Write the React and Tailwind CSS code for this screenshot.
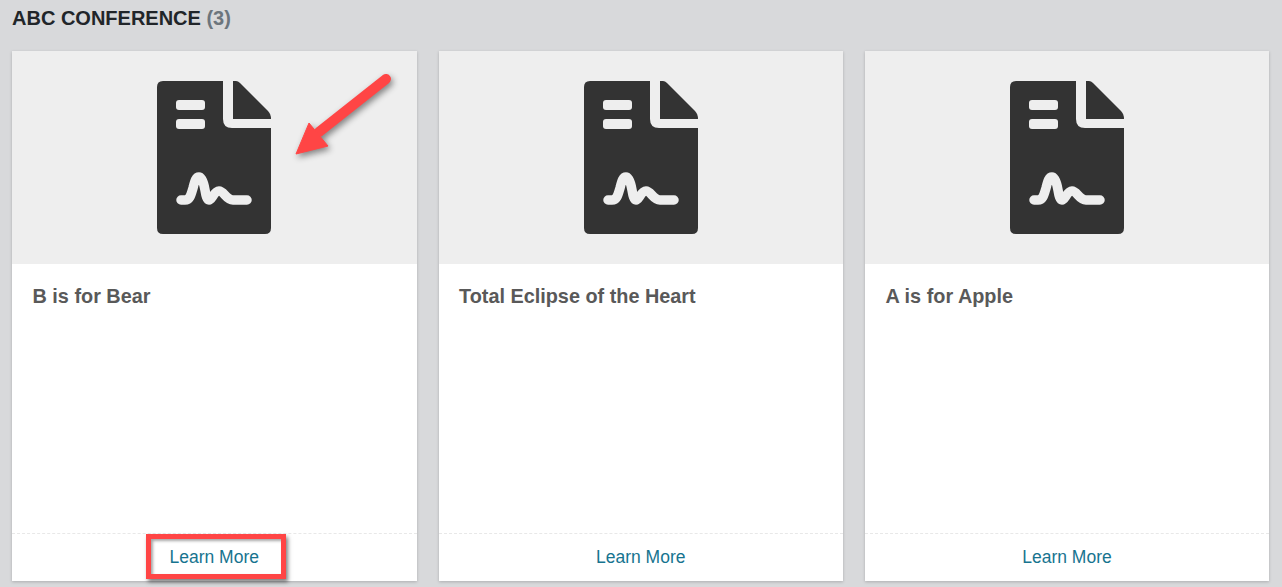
import React from 'react';

const DocIcon = () => (
    <svg width="114" height="153" viewBox="0 0 114 153">
        <path d="M6 0H66V38Q66 47 75 47H114V147Q114 153 108 153H6Q0 153 0 147V6Q0 0 6 0Z" fill="#333333" />
        <path d="M76 0H79Q81 0 83 2L111 30Q114 33 114 38H76Z" fill="#333333" />
        <rect x="19" y="19" width="29" height="10" rx="3" fill="#eeeeee" />
        <rect x="19" y="38" width="29" height="10" rx="3" fill="#eeeeee" />
        <path
            d="M24 119H28C33 119 34 114 36 107C38 99 39 96 42 96C45 96 47 103 48 109C49 115 50 119 52 119C55 119 57 110 62 110C67 110 69 119 76 119H90"
            fill="none"
            stroke="#eeeeee"
            strokeWidth="9.5"
            strokeLinecap="round"
            strokeLinejoin="round"
        />
    </svg>
);

const cards = ['B is for Bear', 'Total Eclipse of the Heart', 'A is for Apple'];

const Card = ({ title }) => (
    <div className="flex h-[530px] flex-col bg-white shadow-[0_1px_3px_rgba(0,0,0,0.2)]">
        <div className="flex h-[213px] items-center justify-center bg-[#eeeeee]">
            <DocIcon />
        </div>
        <h3 className="flex-1 px-[20.5px] pt-[20px] text-[19.85px] font-bold leading-[24px] text-[#595959]">{title}</h3>
        <div className="flex h-[48px] items-center justify-center border-t border-dashed border-[#e8e8e8] text-[17.5px] text-[#17748f]">
            Learn More
        </div>
    </div>
);

export default function App() {
    return (
        <div className="relative h-[587px] overflow-hidden bg-[#d8d9db] font-['Liberation_Sans',Arial,sans-serif]">
            <h2 className="pl-3 pt-[7px] text-[20px] font-bold leading-[22px] text-[#212529]">
                ABC CONFERENCE <span className="text-[#6c757d]">(3)</span>
            </h2>
            <div className="mt-[22px] grid grid-cols-[404.5px_404.5px_404px] gap-[22px] pl-3">
                {cards.map((title) => (
                    <Card key={title} title={title} />
                ))}
            </div>

            {/* annotation arrow */}
            <svg className="absolute left-[285px] top-[65px] drop-shadow-[2px_3px_3px_rgba(0,0,0,0.45)]" width="115" height="100" viewBox="0 0 115 100">
                <path d="M101 14L34 67" stroke="#ff4545" strokeWidth="10" strokeLinecap="round" />
                <path d="M11 89L24 58L43 81Z" fill="#ff4545" stroke="#ff4545" strokeWidth="1" strokeLinejoin="round" />
            </svg>

            {/* annotation box */}
            <div className="absolute left-[146px] top-[534px] h-[45px] w-[140px] border-[5px] border-[#ff4545] shadow-[2px_3px_4px_rgba(0,0,0,0.5),inset_2px_2px_3px_rgba(0,0,0,0.35)]" />
        </div>
    );
}
